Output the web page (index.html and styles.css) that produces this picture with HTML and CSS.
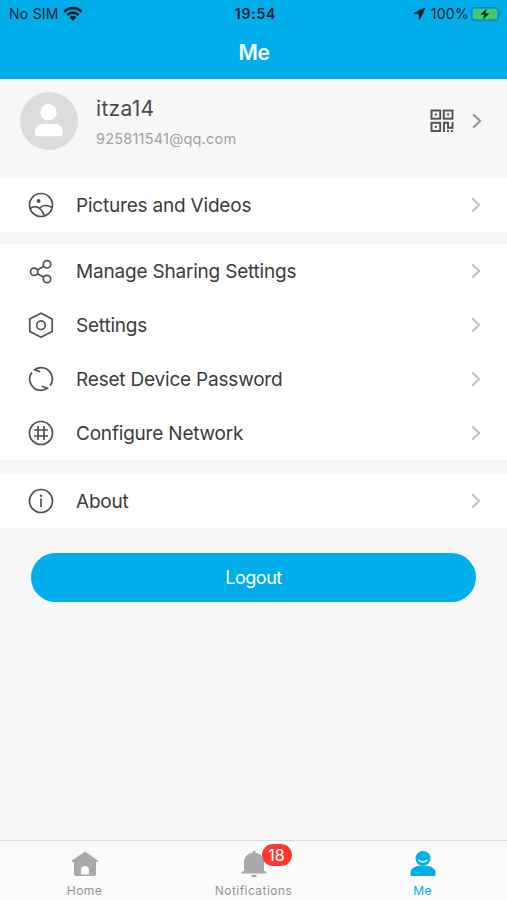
FILE: index.html
```html
<!DOCTYPE html>
<html lang="en">
<head>
<meta charset="utf-8">
<meta name="viewport" content="width=device-width, initial-scale=1">
<title>Me</title>
<link rel="stylesheet" href="styles.css">
</head>
<body>
<header class="header">
  <div class="status">
    <div class="status-left"><span class="carrier">No SIM</span>
      <svg width="20" height="16" viewBox="0 0 20 16"><g fill="none" stroke="#06202b" stroke-width="2.7"><path d="M1.3 5.700a12.300 12.300 0 0 1 17.400 0"/><path d="M4.300 9a8.100 8.100 0 0 1 11.400 0"/></g><path d="M6.500 11.300a5 5 0 0 1 7 0L10 14.800z" fill="#06202b"/></svg>
    </div>
    <span class="time">19:54</span>
    <div class="status-right">
      <svg width="13" height="13" viewBox="0 0 13 13"><path d="M12 1L1 6.100Q.6 6.600 1.200 6.700H6.200V11.800Q6.500 12.400 7 11.800z" fill="#06202b" stroke="#06202b" stroke-width="1" stroke-linejoin="round"/></svg>
      <span class="percent">100%</span>
      <svg width="31" height="14" viewBox="0 0 31 14"><rect x=".7" y=".7" width="26.600" height="12.600" rx="3.500" fill="none" stroke="#2383a4" stroke-width="1.200"/><rect x="2" y="2" width="24" height="10" rx="2" fill="#3fcf68"/><path d="M28.500 4.700q2.200 2.300 0 4.600z" fill="#2383a4"/><path d="M15.800 1.300L9 7.700h4L11.800 12.700 18.700 6.200h-4z" fill="#06202b" stroke="#3fcf68" stroke-width=".4"/></svg>
    </div>
  </div>
  <h1 class="title">Me</h1>
</header>
<main class="main">
  <section class="profile">
    <svg class="avatar" width="58" height="58" viewBox="0 0 58 58"><circle cx="29" cy="29" r="29" fill="#dcdcdc"/><circle cx="28.500" cy="20.300" r="8.200" fill="#fff"/><path d="M15 41.500C15 35 18.500 32 24 32h10c5.500 0 9 3 9 9.500q0 2.700-2 2.700H17q-2 0-2-2.700z" fill="#fff"/></svg>
    <div class="identity"><span class="name">itza14</span><span class="email">925811541@qq.com</span></div>
    <svg class="qr" width="24" height="24" viewBox="0 0 24 24"><g fill="none" stroke="#505050" stroke-width="1.900"><rect x="1.500" y="1.500" width="8.700" height="8.200"/><rect x="13.800" y="1.500" width="8.700" height="8.200"/><rect x="1.500" y="13.800" width="8.700" height="8.200"/><path d="M14 23v-9.200h4v5h4.500V13"/></g><path d="M4.800 4.600h2v2h-2zM17.100 4.600h2v2h-2zM4.800 16.900h2v2h-2zM17 21h2v2h-2zM21 21h2v2h-2z" fill="#505050"/></svg>
    <svg class="chev chev-dark" width="10" height="16" viewBox="0 0 10 16"><path d="M1.200 1.500L8.200 8 1.200 14.500"/></svg>
  </section>
  <nav class="group">
    <a class="row"><svg class="icon" viewBox="0 0 26 26"><circle cx="13" cy="13" r="11.500"/><path d="M2 17C5 13.500 9.500 14 12.500 17.300s3.500 4.500 3.800 6.700M11.500 16.200C14 13 19 12.500 24 15.500"/><circle class="solid" cx="10.600" cy="9" r="1.900"/></svg><span class="label">Pictures and Videos</span><svg class="chev" width="10" height="16" viewBox="0 0 10 16"><path d="M1.200 1.500L8.200 8 1.200 14.500"/></svg></a>
  </nav>
  <nav class="group">
    <a class="row"><svg class="icon" viewBox="0 0 26 26"><circle cx="6.200" cy="13.800" r="3.700"/><circle cx="19" cy="6.300" r="3.700"/><circle cx="19" cy="21" r="3.700"/><path d="M9.400 11.900l6.400-3.700M9.300 15.800l6.600 3.500"/></svg><span class="label">Manage Sharing Settings</span><svg class="chev" width="10" height="16" viewBox="0 0 10 16"><path d="M1.200 1.500L8.200 8 1.200 14.500"/></svg></a>
    <a class="row"><svg class="icon" viewBox="0 0 26 26"><path d="M13 1.200L24.200 7v12.500L13 25.200 1.800 19.500V7z"/><circle cx="13" cy="13.200" r="4.300"/></svg><span class="label">Settings</span><svg class="chev" width="10" height="16" viewBox="0 0 10 16"><path d="M1.200 1.500L8.200 8 1.200 14.500"/></svg></a>
    <a class="row"><svg class="icon" viewBox="0 0 26 26"><path d="M4 6.200A11.300 11.300 0 0 0 13 24.300Q16.500 24.300 19.300 22.300L13.800 20.300M22 19.800A11.300 11.300 0 0 0 13 1.700Q9.500 1.700 6.700 3.700L12.200 5.700"/></svg><span class="label">Reset Device Password</span><svg class="chev" width="10" height="16" viewBox="0 0 10 16"><path d="M1.200 1.500L8.200 8 1.200 14.500"/></svg></a>
    <a class="row"><svg class="icon" viewBox="0 0 26 26"><circle cx="13" cy="13" r="11.500"/><path d="M10 6v14M16 6v14M6 10h14M6 16h14"/></svg><span class="label">Configure Network</span><svg class="chev" width="10" height="16" viewBox="0 0 10 16"><path d="M1.200 1.500L8.200 8 1.200 14.500"/></svg></a>
  </nav>
  <nav class="group group-about">
    <a class="row"><svg class="icon" viewBox="0 0 26 26"><circle cx="13" cy="13" r="11.500"/><path d="M13 10.500v8.500"/><circle class="solid" cx="13" cy="7.800" r="1.200"/></svg><span class="label">About</span><svg class="chev" width="10" height="16" viewBox="0 0 10 16"><path d="M1.200 1.500L8.200 8 1.200 14.500"/></svg></a>
  </nav>
  <button class="logout">Logout</button>
</main>
<footer class="tabs">
  <a class="tab"><svg width="28" height="28" viewBox="0 0 28 28"><path fill-rule="evenodd" d="M14 1.500L27 10.500q.8 1.500-.8 1.500H25v12q0 2-2 2H5q-2 0-2-2V12H1.800q-1.600 0-.8-1.500zM10 24.500h8v-4.500q0-4-4-4t-4 4z" fill="#a9a9a9"/></svg><span class="tab-label">Home</span></a>
  <a class="tab"><span class="bell"><svg width="28" height="28" viewBox="0 0 28 28"><path d="M14 .5q1.500 0 1.500 2.200C21 3.500 24 8 24 12v8.500l2.500 1.800v1.200H1.500v-1.200L4 20.500V12c0-4 2.500-8.500 8.500-9.300Q12.500.5 14 .5zM11 24.700h6q-.5 2.500-3 2.500t-3-2.500z" fill="#a9a9a9"/></svg><span class="badge">18</span></span><span class="tab-label">Notifications</span></a>
  <a class="tab active"><svg width="28" height="28" viewBox="0 0 28 28"><circle cx="14" cy="8.500" r="7.500" fill="#00aeec"/><path d="M1.500 25v-3.500C2 18.500 6 16 10 16h8c4 0 8 2.500 8.500 5.500V25q0 1-1 1h-23q-1 0-1-1z" fill="#00aeec"/><path d="M10 10.200q4 3.600 8 0" fill="none" stroke="#fafafa" stroke-width="1.400" stroke-linecap="round"/></svg><span class="tab-label">Me</span></a>
</footer>
</body>
</html>
```
FILE: styles.css
```css
* { box-sizing: border-box; }
body { margin: 0; height: 900px; display: flex; flex-direction: column; background: #f7f7f7; font-family: Inter, "Liberation Sans", sans-serif; overflow: hidden; }
svg { display: block; flex: none; }
.header { height: 79px; flex: none; background: #00aeec; }
.status { height: 27px; padding: 0 5px 0 9px; display: grid; grid-template-columns: 1fr auto 1fr; align-items: center; color: #06202b; font-size: 14px; line-height: 27px; }
.status-left, .status-right { display: flex; align-items: center; }
.status-left { gap: 4px; }
.carrier { letter-spacing: .25px; }
.status-right { justify-content: flex-end; }
.percent { margin: 0 2px 0 5px; letter-spacing: .3px; }
.time { font-weight: 600; letter-spacing: .8px; }
.title { margin: 0; height: 50px; line-height: 51px; text-align: center; color: #fff; font-size: 21px; font-weight: 600; padding-left: 1px; letter-spacing: -.3px; }
.main { flex: 1; display: flex; flex-direction: column; }
.profile { height: 99px; padding: 13px 25px 0 20px; display: flex; align-items: flex-start; }
.identity { flex: 1; margin-left: 18px; display: flex; flex-direction: column; }
.name { font-size: 21px; line-height: 26px; margin-top: 4px; color: #4b4b4b; letter-spacing: .3px; }
.email { font-size: 14.5px; line-height: 20px; margin-top: 7px; color: #a2a2a2; letter-spacing: .22px; }
.qr { margin: 17px 18px 0 0; }
.chev { fill: none; stroke: #bfbfbf; stroke-width: 2; }
.chev-dark { stroke: #929292; margin-top: 21px; }
.group { background: #fff; margin-bottom: 12px; }
.group-about { margin: 2px 0 0; }
.row { height: 54px; display: flex; align-items: center; padding: 0 26px 0 28px; }
.icon { width: 26px; height: 26px; fill: none; stroke: #505050; stroke-width: 1.7; }
.icon .solid { fill: #505050; stroke: none; }
.label { flex: 1; margin-left: 22px; padding-top: 2px; font-size: 19px; line-height: 24px; letter-spacing: -.2px; color: #3c3c3c; }
.logout { margin: 25px 31px 0; height: 49px; border: 0; border-radius: 25px; background: #00aeec; color: #fff; font: 18px Inter, sans-serif; letter-spacing: -.5px; }
.tabs { height: 60px; flex: none; border-top: 1px solid #dcdcdc; background: #fafafa; display: grid; grid-template-columns: repeat(3, 1fr); }
.tab { display: flex; flex-direction: column; align-items: center; padding-top: 9px; color: #929292; }
.tab-label { font-size: 12px; line-height: 16px; margin-top: 5px; letter-spacing: .45px; }
.active { color: #00aeec; }
.bell { position: relative; }
.badge { position: absolute; left: 22px; top: -6px; width: 30px; height: 22px; border-radius: 11px; background: #ff3b30; color: #fff; font-size: 16px; line-height: 22px; text-align: center; }
```
